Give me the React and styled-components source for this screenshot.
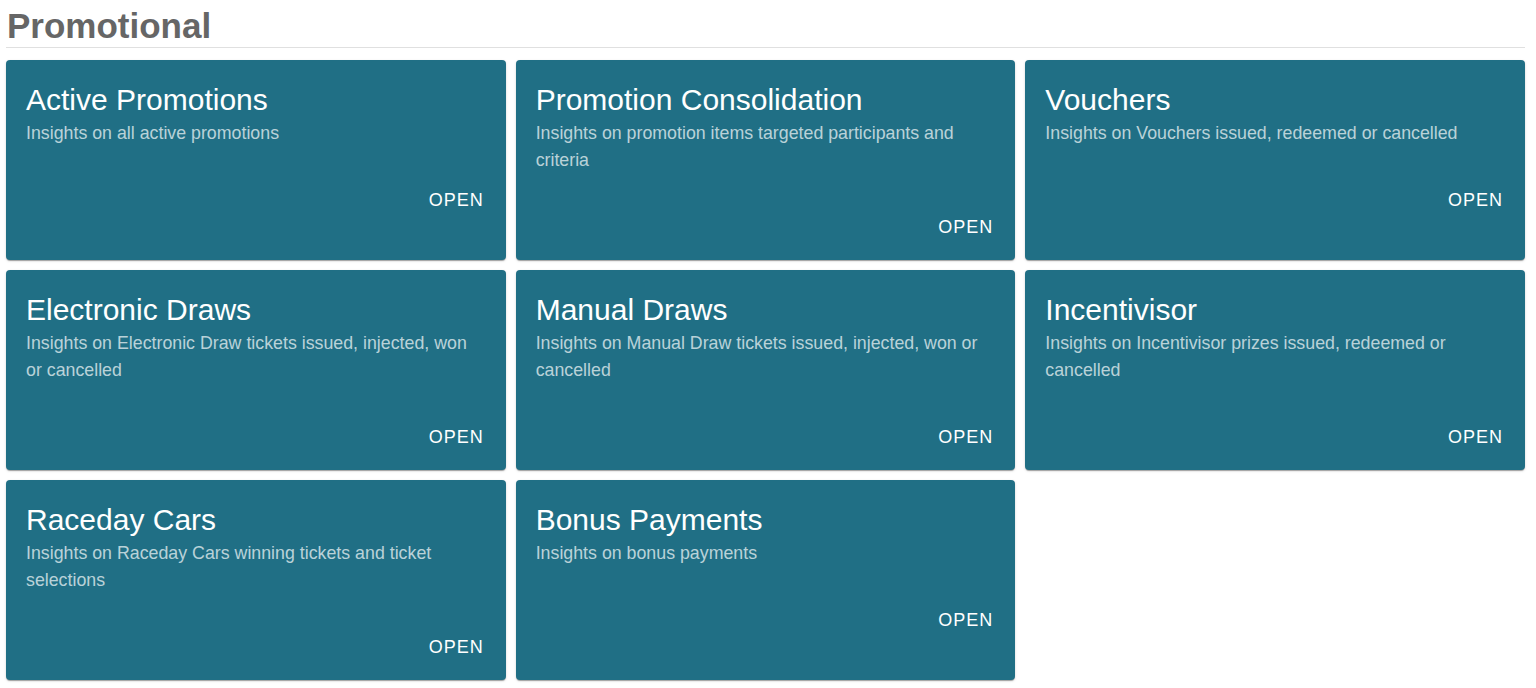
import React from "react";
import styled, { createGlobalStyle } from "styled-components";

const GlobalStyle = createGlobalStyle`
  html, body {
    margin: 0;
    padding: 0;
    background: #ffffff;
    font-family: "Liberation Sans", Arial, Helvetica, sans-serif;
  }
  * { box-sizing: border-box; }
`;

const Page = styled.div`
  padding: 6px 11px 8px 6px;
`;

const SectionTitle = styled.h2`
  margin: 0;
  padding: 0 0 1px 1px;
  font-size: 35px;
  font-weight: 700;
  line-height: 40px;
  color: #666666;
  border-bottom: 1px solid #e0e0e0;
`;

const Grid = styled.div`
  margin-top: 12px;
  display: grid;
  grid-template-columns: repeat(3, 1fr);
  gap: 10px;
`;

const Card = styled.div`
  height: 200px;
  background: #206f85;
  border-radius: 4px;
  box-shadow: 0 2px 1px -1px rgba(0, 0, 0, 0.2), 0 1px 1px 0 rgba(0, 0, 0, 0.14),
    0 1px 3px 0 rgba(0, 0, 0, 0.12);
  padding: 22px 22px 0 20px;
  display: flex;
  flex-direction: column;
`;

const CardTitle = styled.h3`
  margin: 0 0 2px 0;
  font-size: 30px;
  font-weight: 400;
  line-height: 36px;
  color: #ffffff;
`;

const CardText = styled.p`
  margin: 0;
  font-size: 17.8px;
  line-height: 27px;
  color: rgba(255, 255, 255, 0.7);
`;

const OpenButton = styled.button`
  align-self: flex-end;
  margin-top: 40px;
  padding: 0;
  border: none;
  background: transparent;
  color: #ffffff;
  font-family: inherit;
  font-size: 18px;
  line-height: 27px;
  letter-spacing: 1px;
  text-transform: uppercase;
  cursor: pointer;
`;

const items = [
  { title: "Active Promotions", text: "Insights on all active promotions" },
  {
    title: "Promotion Consolidation",
    text: "Insights on promotion items targeted participants and criteria",
  },
  { title: "Vouchers", text: "Insights on Vouchers issued, redeemed or cancelled" },
  {
    title: "Electronic Draws",
    text: "Insights on Electronic Draw tickets issued, injected, won or cancelled",
  },
  {
    title: "Manual Draws",
    text: "Insights on Manual Draw tickets issued, injected, won or cancelled",
  },
  {
    title: "Incentivisor",
    text: "Insights on Incentivisor prizes issued, redeemed or cancelled",
  },
  {
    title: "Raceday Cars",
    text: "Insights on Raceday Cars winning tickets and ticket selections",
  },
  { title: "Bonus Payments", text: "Insights on bonus payments" },
];

export default function App() {
  return (
    <>
      <GlobalStyle />
      <Page>
        <SectionTitle>Promotional</SectionTitle>
        <Grid>
          {items.map((it) => (
            <Card key={it.title}>
              <CardTitle>{it.title}</CardTitle>
              <CardText>{it.text}</CardText>
              <OpenButton>Open</OpenButton>
            </Card>
          ))}
        </Grid>
      </Page>
    </>
  );
}
